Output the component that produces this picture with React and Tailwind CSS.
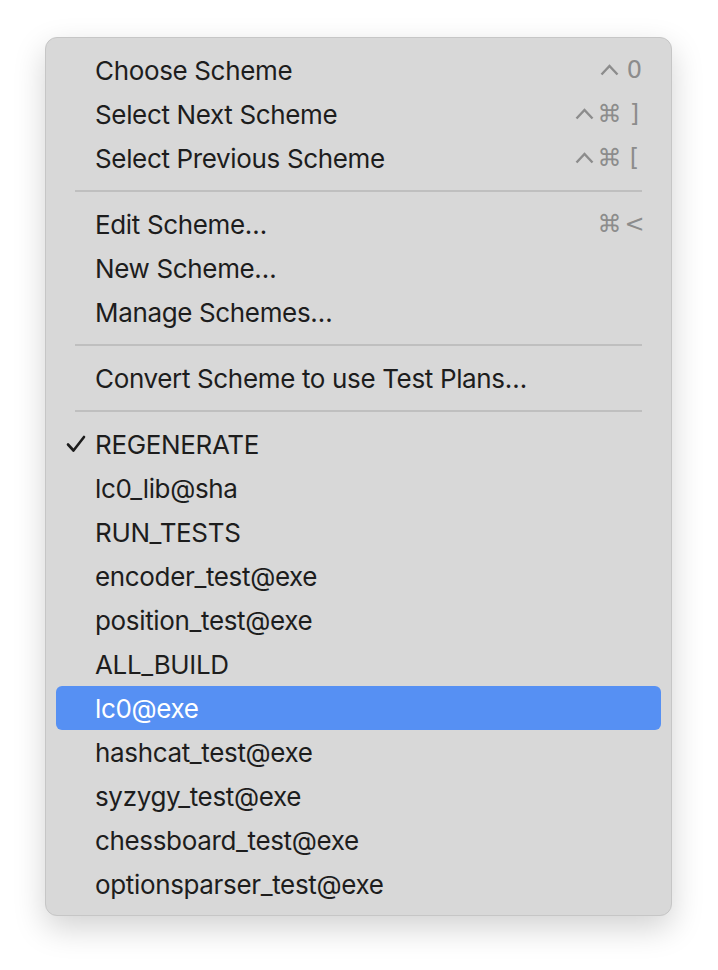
const groups = [
  [
    { label: "Choose Scheme", keys: ["⌃", "0"] },
    { label: "Select Next Scheme", keys: ["⌃", "⌘", "]"] },
    { label: "Select Previous Scheme", keys: ["⌃", "⌘", "["] },
  ],
  [
    { label: "Edit Scheme…", keys: ["⌘", "<"] },
    { label: "New Scheme…" },
    { label: "Manage Schemes…" },
  ],
  [{ label: "Convert Scheme to use Test Plans…" }],
  [
    { label: "REGENERATE", checked: true },
    { label: "lc0_lib@sha" },
    { label: "RUN_TESTS" },
    { label: "encoder_test@exe" },
    { label: "position_test@exe" },
    { label: "ALL_BUILD" },
    { label: "lc0@exe", active: true },
    { label: "hashcat_test@exe" },
    { label: "syzygy_test@exe" },
    { label: "chessboard_test@exe" },
    { label: "optionsparser_test@exe" },
  ],
];

function Check() {
  return (
    <svg width="20" height="18" viewBox="0 0 20 18" className="absolute left-[10px] top-[13px]">
      <path d="M2 9.5 L7.5 15.5 L18 2" fill="none" stroke="#1c1c1c" strokeWidth="2.6" strokeLinecap="round" strokeLinejoin="round" />
    </svg>
  );
}

function Key({ k }) {
  if (k === "⌃") {
    return (
      <span className="flex w-[25px] justify-center">
        <svg width="19" height="12" viewBox="0 0 19 12">
          <path d="M1.5 10.5 L9.5 2 L17.5 10.5" fill="none" stroke="#8c8c8c" strokeWidth="2.4" />
        </svg>
      </span>
    );
  }
  return (
    <span className="w-[25px] text-center font-['DejaVu_Sans',sans-serif] text-[24px]">{k}</span>
  );
}

function Item({ item }) {
  return (
    <div
      className={`relative flex h-[44px] items-center rounded-[6px] pl-[39px] pr-[14px] ${
        item.active ? "bg-[#5690f3] text-white" : "text-[#1d1d1d]"
      }`}
    >
      {item.checked && <Check />}
      <span className="flex-1 tracking-[-0.35px]">{item.label}</span>
      {item.keys && (
        <span className="flex items-center text-[#8c8c8c]">
          {item.keys.map((k, i) => (
            <Key key={i} k={k} />
          ))}
        </span>
      )}
    </div>
  );
}

export default function App() {
  return (
    <div className="min-h-screen bg-white pl-[45px] pt-[37px]">
      <div className="w-[627px] rounded-[12px] border border-[#c6c6c6] bg-[#d8d8d8] px-[10px] pb-[9px] pt-[10px] font-['Inter',sans-serif] text-[26px] shadow-[0_12px_32px_rgba(0,0,0,0.18)]">
        {groups.map((g, gi) => (
          <div key={gi}>
            {gi > 0 && (
              <div className="flex h-[22px] items-center px-[19px]">
                <div className="h-[2px] w-full bg-[#bfbfbf]" />
              </div>
            )}
            {g.map((item) => (
              <Item key={item.label} item={item} />
            ))}
          </div>
        ))}
      </div>
    </div>
  );
}
